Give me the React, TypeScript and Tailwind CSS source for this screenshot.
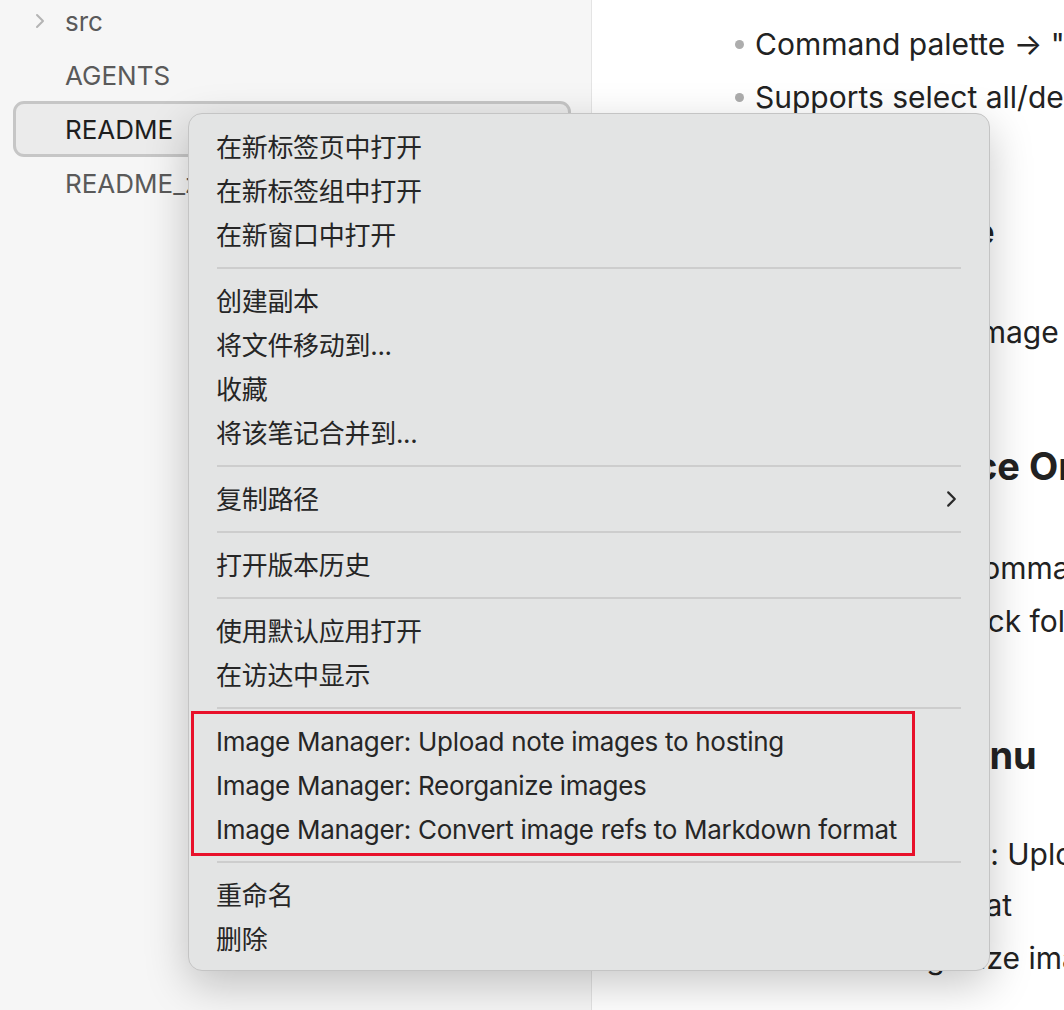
import React from "react";

const FONT = 'font-["Inter","Noto_Sans_CJK_SC",sans-serif]';

type Entry =
  | { kind: "item"; label: string; sub?: boolean }
  | { kind: "sep" };

const menu: Entry[] = [
  { kind: "item", label: "在新标签页中打开" },
  { kind: "item", label: "在新标签组中打开" },
  { kind: "item", label: "在新窗口中打开" },
  { kind: "sep" },
  { kind: "item", label: "创建副本" },
  { kind: "item", label: "将文件移动到..." },
  { kind: "item", label: "收藏" },
  { kind: "item", label: "将该笔记合并到..." },
  { kind: "sep" },
  { kind: "item", label: "复制路径", sub: true },
  { kind: "sep" },
  { kind: "item", label: "打开版本历史" },
  { kind: "sep" },
  { kind: "item", label: "使用默认应用打开" },
  { kind: "item", label: "在访达中显示" },
  { kind: "sep" },
  { kind: "item", label: "Image Manager: Upload note images to hosting" },
  { kind: "item", label: "Image Manager: Reorganize images" },
  { kind: "item", label: "Image Manager: Convert image refs to Markdown format" },
  { kind: "sep" },
  { kind: "item", label: "重命名" },
  { kind: "item", label: "删除" },
];

type Line = { text: string; cls: string; bullet?: boolean };

const lines: Line[] = [
  { text: 'Command palette → "Image Manager: Upload note images"', bullet: true, cls: "mt-[18px] h-[53px] leading-[53px] text-[30px]" },
  { text: "Supports select all/deselect all", bullet: true, cls: "h-[53px] leading-[53px] text-[30px]" },
  { text: "Folder Batch Mode", cls: "mt-[78px] h-[60px] leading-[60px] text-[34px] font-bold pl-[92px]" },
  { text: "Uploads every image", cls: "mt-[44px] h-[53px] leading-[53px] text-[30px] pl-[167px]" },
  { text: "Image Reference Organization", cls: "mt-[77px] h-[60px] leading-[60px] text-[38px] font-bold pl-[115px]" },
  { text: "Run it with the command palette", bullet: true, cls: "mt-[46px] h-[53px] leading-[53px] text-[30px]" },
  { text: "Or use a right click folder menu", bullet: true, cls: "h-[53px] leading-[53px] text-[30px]" },
  { text: "Right-click Menu", cls: "mt-[77px] h-[60px] leading-[60px] text-[38px] font-bold pl-[129px]" },
  { text: '"Image Manager: Upload note images"', bullet: true, cls: "mt-[44px] h-[50px] leading-[50px] text-[30px]" },
  { text: "Refs to MD format", bullet: true, cls: "h-[53px] leading-[53px] text-[30px]" },
  { text: "Folder: Reorganize images", bullet: true, cls: "h-[53px] leading-[53px] text-[30px]" },
];

function Chevron({ className }: { className: string }) {
  return (
    <svg viewBox="0 0 10 16" className={className} fill="none" stroke="currentColor" strokeWidth="2" strokeLinecap="round" strokeLinejoin="round">
      <path d="M2 2l6 6-6 6" />
    </svg>
  );
}

export default function App() {
  return (
    <div className={`relative flex h-[1010px] w-[1064px] overflow-hidden bg-white ${FONT}`}>
      {/* Sidebar */}
      <div className="w-[592px] shrink-0 border-r border-[#e4e4e4] bg-[#f6f6f6] pl-[13px] pr-[20px]">
        <div className="-mt-[6px] flex flex-col">
          <div className="flex h-[54px] items-center pl-[22px] text-[26px] text-[#5a5a5a]">
            <Chevron className="mr-[20px] h-[16px] w-[10px] text-[#b4b4b4]" />
            <span>src</span>
          </div>
          <div className="flex h-[54px] items-center pl-[52px] text-[26px] text-[#5a5a5a]">AGENTS</div>
          <div className="-my-[1px] flex h-[56px] items-center rounded-[11px] border-[3px] border-[#c6c6c6] bg-[#ebebeb] pl-[49px] text-[26px] text-[#1e1e1e]">
            README
          </div>
          <div className="flex h-[54px] items-center pl-[52px] text-[26px] text-[#5a5a5a]">README_zh</div>
        </div>
      </div>

      {/* Editor */}
      <div className="flex flex-1 flex-col text-[#222222]">
        {lines.map((l, i) => (
          <div key={i} className={`whitespace-nowrap ${l.cls}`}>
            {l.bullet ? (
              <span className="flex items-center pl-[143px]">
                <span className="mr-[11px] h-[9px] w-[9px] rounded-full bg-[#adadad]" />
                <span>{l.text}</span>
              </span>
            ) : (
              l.text
            )}
          </div>
        ))}
      </div>

      {/* Context menu */}
      <div className="absolute left-[188px] top-[113px] w-[802px] rounded-[14px] border border-[#c4c4c4] bg-[#e3e4e4] pb-[9px] pt-[11px] shadow-[0_14px_44px_rgba(0,0,0,0.22)]">
        {menu.map((e, i) =>
          e.kind === "sep" ? (
            <div key={i} className="flex h-[22px] items-center px-[28px]">
              <div className="h-[2px] w-full bg-[#cdcdcd]" />
            </div>
          ) : (
            <div key={i} className="flex h-[44px] items-center justify-between pl-[27px] pr-[32px] text-[26px] tracking-[-0.3px] text-[#262626]">
              <span>{e.label}</span>
              {e.sub && <Chevron className="h-[18px] w-[11px] text-[#2a2a2a]" />}
            </div>
          )
        )}
        <div className="pointer-events-none absolute left-[2px] top-[597px] h-[145px] w-[724px] border-[3px] border-[#e8102a]" />
      </div>
    </div>
  );
}
